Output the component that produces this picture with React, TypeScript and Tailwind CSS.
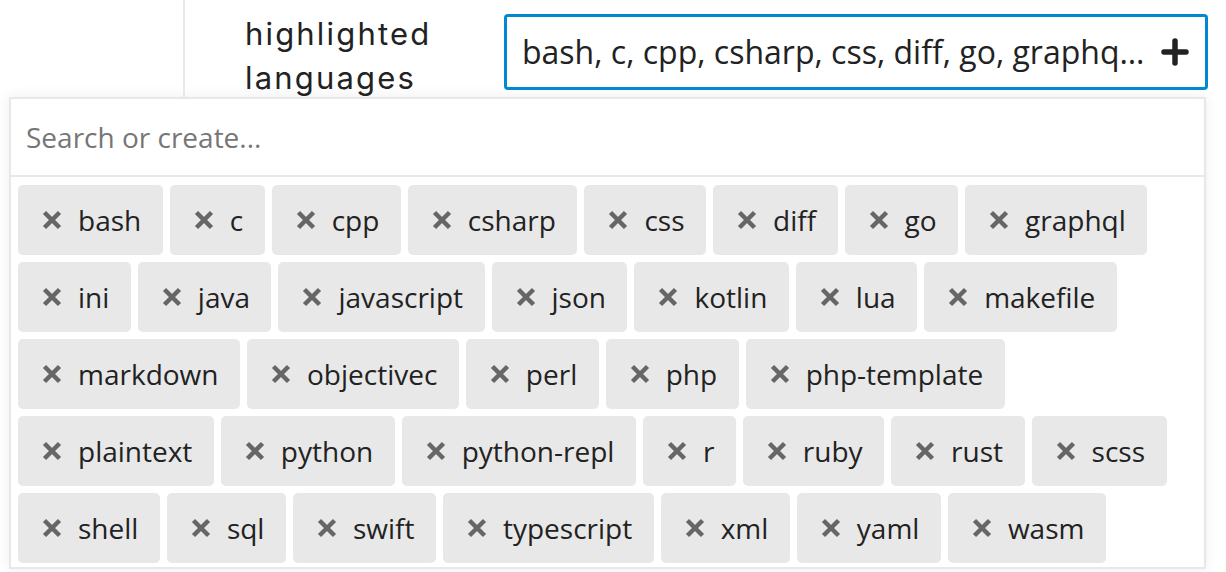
import { useState } from 'react'

const LANGUAGES = [
  'bash', 'c', 'cpp', 'csharp', 'css', 'diff', 'go', 'graphql',
  'ini', 'java', 'javascript', 'json', 'kotlin', 'lua', 'makefile',
  'markdown', 'objectivec', 'perl', 'php', 'php-template',
  'plaintext', 'python', 'python-repl', 'r', 'ruby', 'rust', 'scss',
  'shell', 'sql', 'swift', 'typescript', 'xml', 'yaml', 'wasm',
]

function XIcon() {
  return (
    <svg width="20" height="20" viewBox="0 0 20 20" className="shrink-0 text-[#666666]">
      <path d="M2.5 2.5 L17.5 17.5 M17.5 2.5 L2.5 17.5" stroke="currentColor" strokeWidth="4.5" />
    </svg>
  )
}

function PlusIcon() {
  return (
    <svg width="28" height="28" viewBox="0 0 28 28" className="shrink-0 text-[#222222]">
      <path d="M14 3 V25 M3 14 H25" stroke="currentColor" strokeWidth="5.5" strokeLinecap="round" />
    </svg>
  )
}

function Tag({ label, onRemove }: { label: string; onRemove: () => void }) {
  return (
    <button
      type="button"
      onClick={onRemove}
      className="flex h-[70px] items-center gap-[16px] rounded-[5px] bg-[#e8e8e8] pl-[24px] pr-[21.5px] text-[28px] text-[#222222]"
    >
      <XIcon />
      <span>{label}</span>
    </button>
  )
}

export default function App() {
  const [selected, setSelected] = useState(LANGUAGES)
  const [query, setQuery] = useState('')

  return (
    <div className="h-[572px] w-[1226px] overflow-hidden bg-white font-['Open_Sans',sans-serif]">
      <div className="flex h-[97px]">
        <div className="w-[185px] shrink-0 border-r-2 border-[#e8e8e8]" />
        <div className="w-[319px] shrink-0 pl-[60px] pt-[12px] font-['Inter',sans-serif] text-[31px] leading-[44px] tracking-[0.07em] text-[#222222]">
          highlighted
          <br />
          languages
        </div>
        <div className="mt-[14px] flex h-[76px] w-[704px] items-center gap-[14px] rounded-[4px] border-[3px] border-[#0288d1] pl-[15px] pr-[16px]">
          <span className="min-w-0 flex-1 truncate text-[32px] text-[#222222]">
            {selected.join(', ')}
          </span>
          <PlusIcon />
        </div>
      </div>

      <div className="ml-[9px] w-[1197px] border-2 border-[#e8e8e8] bg-white shadow-[0_0_14px_rgba(0,0,0,0.07)]">
        <input
          value={query}
          onChange={(e) => setQuery(e.target.value)}
          placeholder="Search or create..."
          className="block h-[78px] w-full border-b-2 border-[#e8e8e8] px-[15px] text-[28px] text-[#222222] outline-none placeholder:text-[#767676]"
        />
        <div className="flex flex-wrap gap-[7px] px-[7px] pb-[4px] pt-[8px]">
          {selected
            .filter((l) => l.includes(query))
            .map((l) => (
              <Tag key={l} label={l} onRemove={() => setSelected((s) => s.filter((x) => x !== l))} />
            ))}
        </div>
      </div>
    </div>
  )
}
